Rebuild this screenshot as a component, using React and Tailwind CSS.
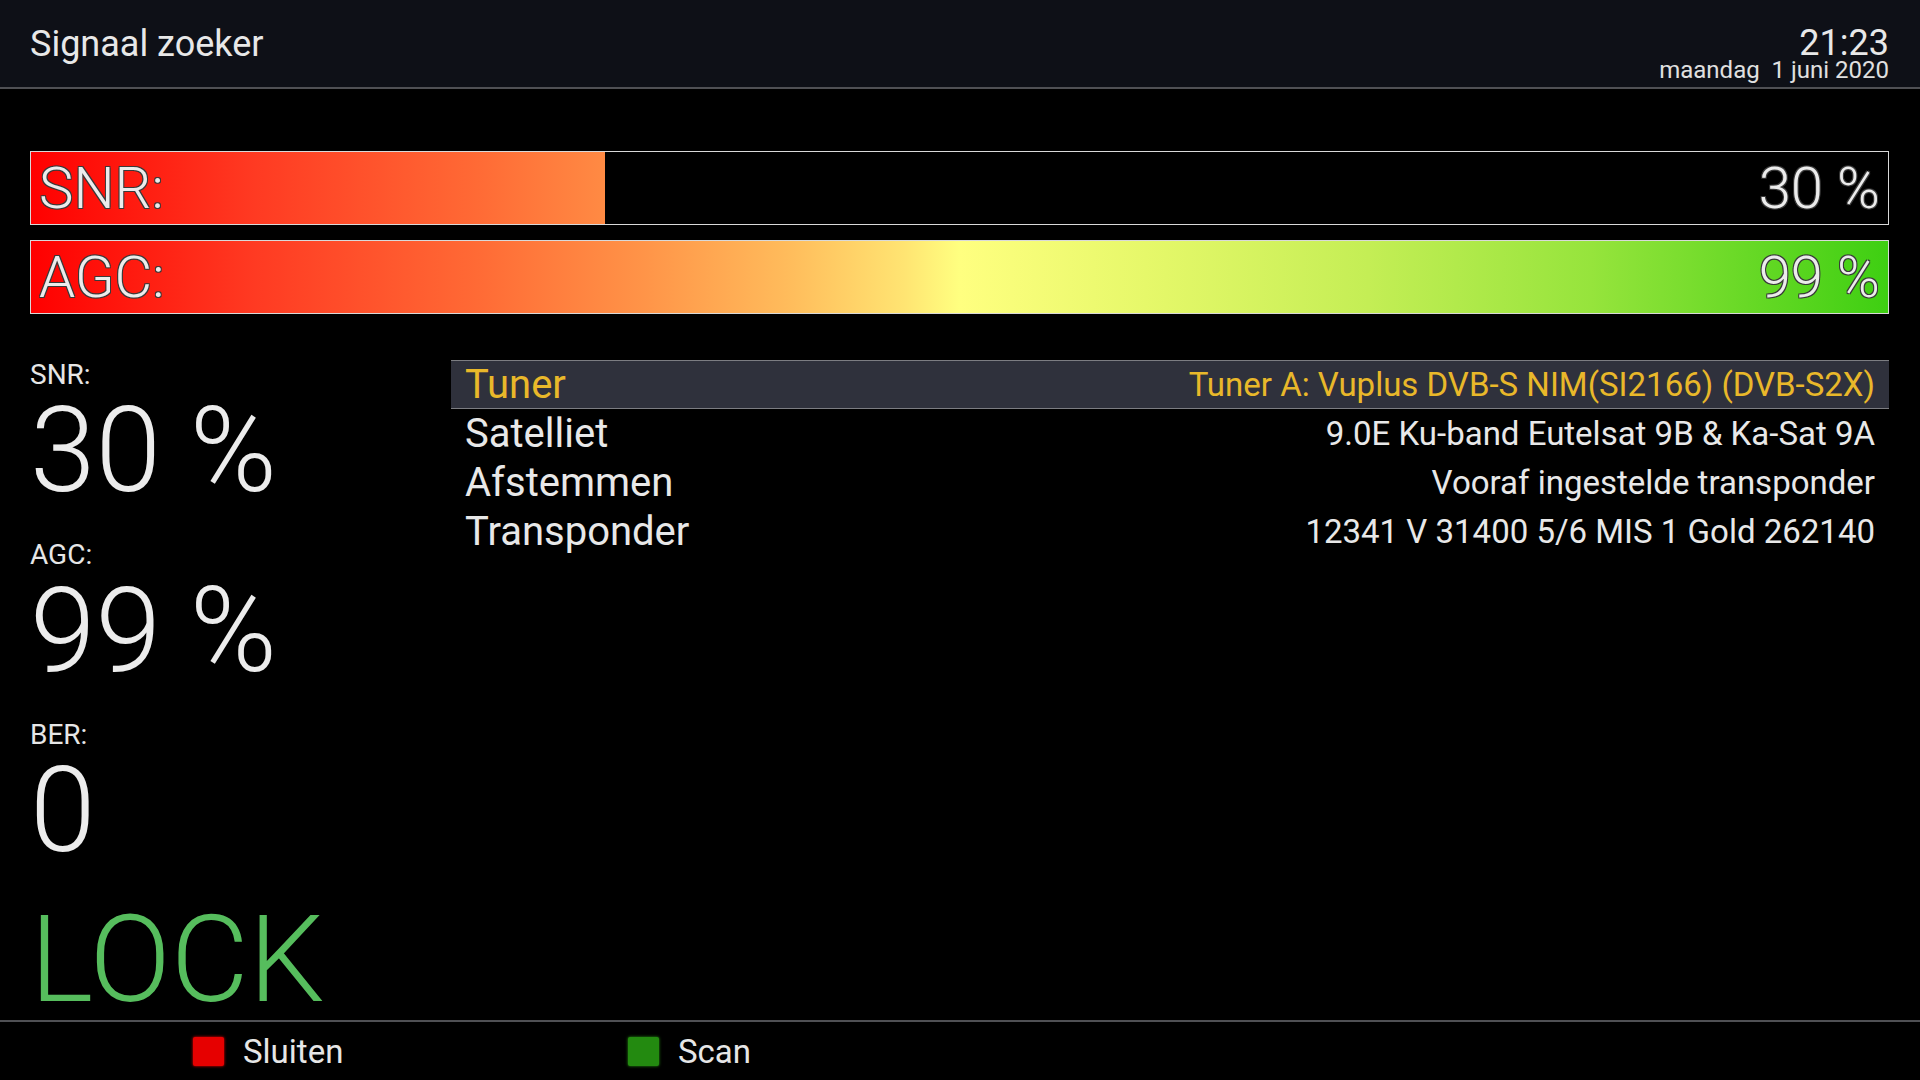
import React from 'react';

const GRADIENT =
  'bg-[linear-gradient(to_right,#ff0000_0%,#ff3a22_12%,#ff6a35_24%,#ff9448_33%,#ffbd5c_41%,#ffe472_47%,#ffff80_50%,#e6f86a_60%,#c4ee55_72%,#96e43c_84%,#3ecf12_100%)]';

const OUTLINE =
  '[text-shadow:1px_1px_0_#3a3a3a,-1px_-1px_0_#3a3a3a,1px_-1px_0_#3a3a3a,-1px_1px_0_#3a3a3a]';

function Bar({ label, value, fill }) {
  return (
    <div className="relative h-[74px] border border-[#d9d9d9] bg-black overflow-hidden">
      <div className="absolute inset-y-0 left-0 overflow-hidden" style={{ width: fill + '%' }}>
        <div className={`h-full w-[1857px] ${GRADIENT}`} />
      </div>
      <div className={`relative h-full flex items-center justify-between pl-[8px] pr-[8px] text-[58px] leading-none font-light text-[#ececec] ${OUTLINE}`}>
        <span>{label}</span>
        <span>{value}</span>
      </div>
    </div>
  );
}

function Stat({ label, value, first }) {
  return (
    <div className={first ? '' : 'mt-[28px]'}>
      <div className="h-[40px] leading-[40px] text-[28px] text-[#e6e6e6]">{label}</div>
      <div className="h-[112px] leading-[112px] text-[118px] font-light text-[#ececec]">{value}</div>
    </div>
  );
}

const rows = [
  ['Tuner', 'Tuner A: Vuplus DVB-S NIM(SI2166) (DVB-S2X)'],
  ['Satelliet', '9.0E Ku-band Eutelsat 9B & Ka-Sat 9A'],
  ['Afstemmen', 'Vooraf ingestelde transponder'],
  ['Transponder', '12341 V 31400 5/6 MIS 1 Gold 262140'],
];

export default function App() {
  return (
    <div className="w-[1920px] h-[1080px] bg-black flex flex-col overflow-hidden font-['Roboto','Liberation_Sans',sans-serif]">
      {/* header */}
      <div className="h-[89px] shrink-0 bg-[#0e1017] border-b-2 border-[#4f5054] flex items-center justify-between pl-[30px] pr-[31px]">
        <div className="text-[36px] text-[#e8e8e8] leading-none">Signaal zoeker</div>
        <div className="flex flex-col items-end pt-[23px]">
          <div className="text-[36px] leading-[30px] text-[#e8e8e8]">21:23</div>
          <div className="text-[24px] leading-[24px] text-[#e0e0e0] whitespace-pre">maandag  1 juni 2020</div>
        </div>
      </div>

      {/* main */}
      <div className="flex-1 pl-[30px] pr-[31px] pt-[62px] flex flex-col">
        <Bar label="SNR:" value="30 %" fill={30.9} />
        <div className="mt-[15px]">
          <Bar label="AGC:" value="99 %" fill={100} />
        </div>

        <div className="mt-[41px] flex">
          <div className="w-[421px] shrink-0 flex flex-col">
            <Stat label="SNR:" value="30 %" first />
            <Stat label="AGC:" value="99 %" />
            <Stat label="BER:" value="0" />
            <div className="mt-[37px] h-[112px] leading-[112px] text-[120px] font-light text-[#56bd5d]">LOCK</div>
          </div>

          <div className="flex-1 mt-[5px]">
            {rows.map(([k, v], i) => (
              <div
                key={k}
                className={
                  'h-[49px] flex items-center justify-between pl-[14px] pr-[14px] ' +
                  (i === 0
                    ? 'bg-[#2f313c] border-y border-[#7c7d82] text-[#e9b82a]'
                    : 'text-[#e8e8e8]')
                }
              >
                <span className="text-[40px] leading-none">{k}</span>
                <span className="text-[33px] leading-none">{v}</span>
              </div>
            ))}
          </div>
        </div>
      </div>

      {/* footer */}
      <div className="h-[60px] shrink-0 border-t-2 border-[#4f5054] flex items-center pl-[193px]">
        <div className="w-[435px] flex items-center">
          <div className="w-[31px] h-[29px] bg-[#e60000] rounded-[2px] shadow-[0_0_3px_#ff0000]" />
          <span className="ml-[19px] text-[33px] leading-none text-[#e6e6e6]">Sluiten</span>
        </div>
        <div className="flex items-center">
          <div className="w-[31px] h-[29px] bg-[#238a10] rounded-[2px] shadow-[0_0_3px_#2a9a14]" />
          <span className="ml-[19px] text-[33px] leading-none text-[#e6e6e6]">Scan</span>
        </div>
      </div>
    </div>
  );
}
